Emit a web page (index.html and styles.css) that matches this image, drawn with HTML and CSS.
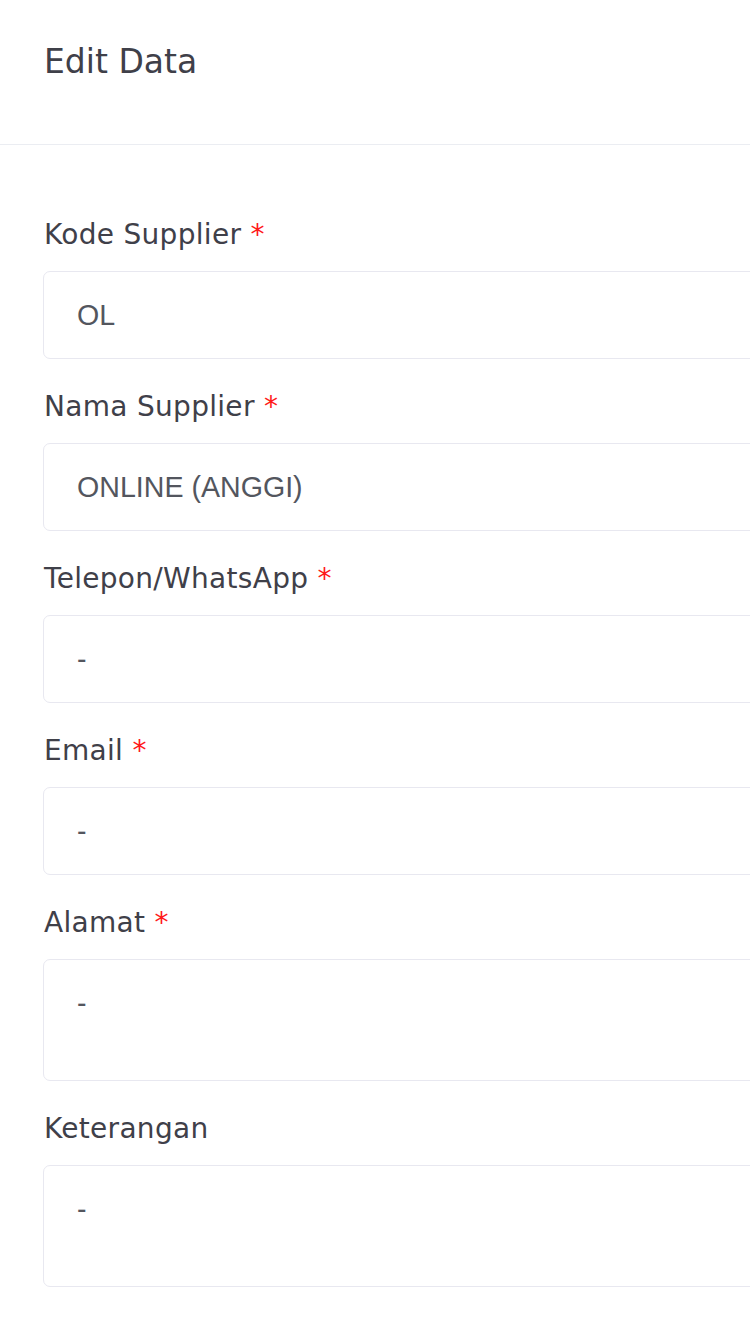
FILE: index.html
```html
<!DOCTYPE html>
<html lang="id">
<head>
<meta charset="utf-8">
<title>Edit Data</title>
<link rel="stylesheet" href="styles.css">
</head>
<body>
<div class="page">
  <header class="header">
    <h1 class="title">Edit Data</h1>
  </header>
  <form class="form">
    <div class="field">
      <label class="label">Kode Supplier <span class="req">*</span></label>
      <input class="control" type="text" value="OL">
    </div>
    <div class="field">
      <label class="label">Nama Supplier <span class="req">*</span></label>
      <input class="control" type="text" value="ONLINE (ANGGI)">
    </div>
    <div class="field">
      <label class="label">Telepon/WhatsApp <span class="req">*</span></label>
      <input class="control" type="text" value="-">
    </div>
    <div class="field">
      <label class="label">Email <span class="req">*</span></label>
      <input class="control" type="text" value="-">
    </div>
    <div class="field">
      <label class="label">Alamat <span class="req">*</span></label>
      <textarea class="control area">-</textarea>
    </div>
    <div class="field field-last">
      <label class="label">Keterangan</label>
      <textarea class="control area">-</textarea>
    </div>
  </form>
</div>
</body>
</html>
```
FILE: styles.css
```css
html, body {
  margin: 0;
  padding: 0;
  background: #ffffff;
  overflow: hidden;
}
.page {
  width: 100%;
  overflow: hidden;
  font-family: "DejaVu Sans", "Open Sans", sans-serif;
  color: #3f4049;
}
.header {
  padding: 42px 44px 62px;
  border-bottom: 1px solid #ebedf2;
}
.title {
  margin: 0;
  font-size: 33px;
  line-height: 40px;
  font-weight: 400;
  color: #3f4049;
}
.form {
  padding: 70px 0 0 43px;
}
.field {
  display: flex;
  flex-direction: column;
  margin-bottom: 28px;
}
.field-last {
  margin-top: 2px;
}
.label {
  display: block;
  margin-left: 1px;
  margin-bottom: 16px;
  font-size: 28px;
  line-height: 40px;
  font-weight: 400;
  letter-spacing: 0.3px;
  color: #3f4049;
}
.req {
  color: #ff1a1a;
}
.control {
  box-sizing: border-box;
  width: 760px;
  height: 88px;
  margin: 0;
  padding: 0 33px;
  border: 1px solid #e8e8f0;
  border-radius: 7px;
  background: #ffffff;
  font-family: "Liberation Sans", Arial, sans-serif;
  font-size: 28.6px;
  color: #53565e;
  outline: none;
}
.area {
  height: 122px;
  padding: 27px 33px 0;
  line-height: normal;
  resize: none;
  overflow: hidden;
}
```
